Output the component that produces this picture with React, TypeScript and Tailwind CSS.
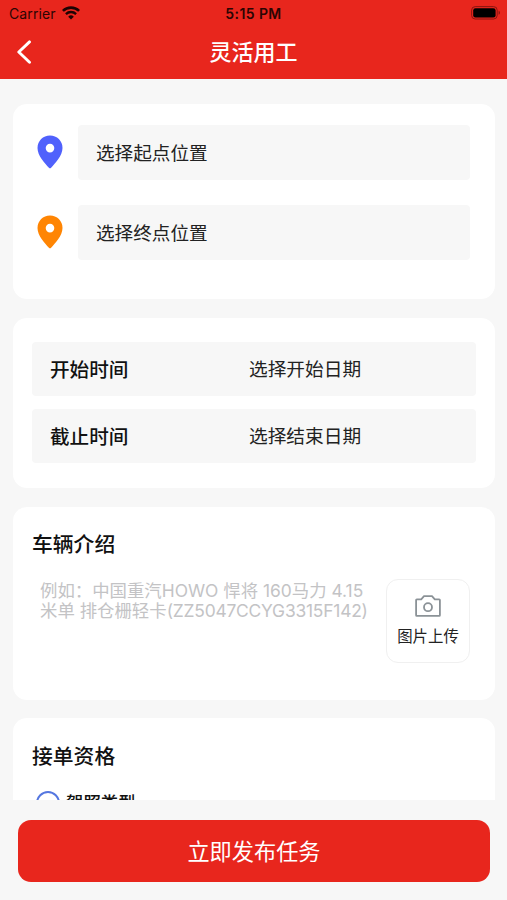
import { clsx } from "clsx";

interface CardProps {
  children: React.ReactNode;
  className?: string;
}

interface LocationRowProps {
  label: string;
  color: string;
}

interface DateRowProps {
  label: string;
  value: string;
}

const WifiIcon = () => (
  <svg className="ml-[6px] h-[14px] w-[18px]" viewBox="0 0 18 14" fill="none">
    <path d="M0.9 4.9a11.6 11.6 0 0 1 16.2 0" stroke="#1d0303" strokeWidth="2.6" />
    <path d="M3.9 8.1a7.3 7.3 0 0 1 10.2 0" stroke="#1d0303" strokeWidth="2.3" />
    <path d="M9 13.6 6.2 10.7a4 4 0 0 1 5.6 0Z" fill="#1d0303" />
  </svg>
);

const BatteryIcon = () => (
  <svg className="h-[14px] w-[30px]" viewBox="0 0 30 14" fill="none">
    <rect x="0.6" y="0.6" width="25.6" height="12.4" rx="3.6" stroke="#8a1510" strokeWidth="1" />
    <rect x="2.2" y="2.2" width="22.4" height="9.2" rx="2.2" fill="#000" />
    <path d="M27.6 4.8c1.9.7 1.9 3.3 0 4Z" fill="#8a1510" />
  </svg>
);

const PinIcon = ({ color }: { color: string }) => (
  <svg className="mb-[2px] h-[34px] w-[26px] shrink-0" viewBox="0 0 26 34">
    <path
      fillRule="evenodd"
      fill={color}
      d="M13 .6C6 .6.5 6 .5 12.900c0 7.600 7.300 15.200 11.400 19.800a1.500 1.500 0 0 0 2.200 0c4.100-4.600 11.400-12.200 11.400-19.800C25.500 6 20 .6 13 .6Zm0 8.200a4.300 4.300 0 1 1 0 8.600 4.300 4.300 0 0 1 0-8.600Z"
    />
  </svg>
);

const CameraIcon = () => (
  <svg className="h-[22px] w-[26px]" viewBox="0 0 26 22" fill="none" stroke="#8b9297" strokeWidth="1.8">
    <path
      d="M1.800 4.300h4.400L9 1.100h8l2.800 3.200h4.400c.4 0 .7.3.7.7v15.200c0 .4-.3.700-.7.700H1.800c-.4 0-.7-.3-.7-.7V5c0-.4.3-.7.7-.7Z"
      strokeLinejoin="round"
    />
    <circle cx="13" cy="12.200" r="4" />
  </svg>
);

const Card = ({ children, className = "" }: CardProps) => (
  <section className={clsx("shrink-0 rounded-[14px] bg-white", className)}>{children}</section>
);

const LocationRow = ({ label, color }: LocationRowProps) => (
  <div className="flex items-center">
    <PinIcon color={color} />
    <button className="ml-[15px] flex h-[55px] flex-1 items-center rounded-[4px] bg-[#f7f7f7] pl-[18px] pt-[2px] text-[18.6px] text-[#222]">
      {label}
    </button>
  </div>
);

const DateRow = ({ label, value }: DateRowProps) => (
  <div className="flex h-[54px] items-center rounded-[4px] bg-[#f7f7f7] pl-[18px] pt-[3px]">
    <span className="w-[199px] text-[19.6px] font-medium text-[#111]">{label}</span>
    <span className="text-[18.7px] text-[#222]">{value}</span>
  </div>
);

const Header = () => (
  <header className="h-[79px] shrink-0 bg-[#e8261d]">
    <div className="grid h-[26px] grid-cols-3 items-center pl-[9px] pr-[6px] font-['Inter',sans-serif] text-[14px] text-[#2b0503]">
      <div className="flex items-center tracking-[0.1px]">
        Carrier
        <WifiIcon />
      </div>
      <div className="pr-[3px] text-center font-semibold tracking-[0.4px]">5:15 PM</div>
      <div className="flex justify-end">
        <BatteryIcon />
      </div>
    </div>
    <div className="grid h-[52px] grid-cols-3 items-center px-4">
      <svg className="h-6 w-4" viewBox="0 0 16 24" fill="none">
        <path d="M13.500 1.900 2.800 12l10.700 10.200" stroke="#fff" strokeWidth="2.900" strokeLinecap="round" strokeLinejoin="round" />
      </svg>
      <h1 className="text-center text-[22px] font-medium text-white">灵活用工</h1>
    </div>
  </header>
);

export default function App() {
  return (
    <div className="flex h-[900px] w-[507px] flex-col overflow-hidden bg-[#f7f7f7] font-['Inter','Noto_Sans_CJK_SC',sans-serif]">
      <Header />

      <main className="flex min-h-0 flex-1 flex-col overflow-hidden pl-[13px] pr-[12px] pt-[25px]">
        <Card className="flex h-[195px] flex-col gap-[25px] pl-6 pr-[25px] pt-[21px]">
          <LocationRow label="选择起点位置" color="#5061fc" />
          <LocationRow label="选择终点位置" color="#ff8503" />
        </Card>

        <Card className="mt-[19px] flex h-[170px] flex-col gap-[13px] px-[19px] pt-6">
          <DateRow label="开始时间" value="选择开始日期" />
          <DateRow label="截止时间" value="选择结束日期" />
        </Card>

        <Card className="mt-[19px] h-[193px] pl-[19px] pr-[25px] pt-[22px]">
          <h2 className="text-[20.8px] font-medium leading-8 text-[#111]">车辆介绍</h2>
          <div className="mt-[18px] flex justify-between pl-2">
            <p className="whitespace-nowrap pt-[2px] text-[17.4px] leading-[20.4px] text-[#c3c3c5]">
              例如：中国重汽HOWO 悍将 160马力 4.15
              <br />
              米单 排仓栅轻卡<span className="tracking-[-0.2px]">(ZZ5047CCYG3315F142)</span>
            </p>
            <button className="flex h-[84px] w-[84px] shrink-0 flex-col items-center rounded-[12px] border border-[#f0f0f0] bg-white pt-[15px]">
              <CameraIcon />
              <span className="mt-[8px] text-[15.4px] leading-6 text-[#222]">图片上传</span>
            </button>
          </div>
        </Card>

        <Card className="mt-[18px] h-[200px] px-[19px] pt-[23px]">
          <h2 className="text-[20.8px] font-medium leading-8 text-[#111]">接单资格</h2>
          <div className="mt-[18px] flex items-center pl-[4px]">
            <span className="h-6 w-6 rounded-full border-2 border-[#5577e0]" />
            <span className="ml-[6px] text-[17.4px] font-medium leading-6 text-[#111]">驾照类型</span>
          </div>
        </Card>
      </main>

      <footer className="h-[100px] shrink-0 pl-[18px] pr-[17px] pt-[20px]">
        <button className="h-[62px] w-full rounded-[13px] bg-[#e8261d] pt-[2px] text-[22.2px] text-white">
          立即发布任务
        </button>
      </footer>
    </div>
  );
}
